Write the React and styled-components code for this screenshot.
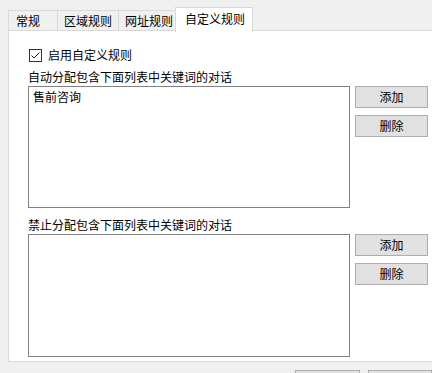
import React from 'react';
import styled, { createGlobalStyle } from 'styled-components';

const GlobalStyle = createGlobalStyle`
  html, body {
    margin: 0;
    padding: 0;
    background: #f0f0f0;
  }
  body {
    font-family: "Noto Sans CJK SC", "Noto Sans", sans-serif;
    font-size: 12px;
    color: #000;
  }
`;

const Window = styled.div`
  width: 432px;
  height: 373px;
  overflow: hidden;
  background: #f0f0f0;
  padding: 7px 0 0 8px;
  box-sizing: border-box;
`;

const TabStrip = styled.div`
  display: flex;
  align-items: flex-end;
  height: 24px;
  position: relative;
  z-index: 1;
`;

const Tab = styled.div`
  box-sizing: border-box;
  width: ${(p) => p.width}px;
  height: ${(p) => (p.active ? 25 : 21)}px;
  margin-right: -1px;
  margin-bottom: ${(p) => (p.active ? -1 : 0)}px;
  padding-left: ${(p) => p.pad}px;
  border: 1px solid #d9d9d9;
  border-bottom: ${(p) => (p.active ? 'none' : '1px solid #d9d9d9')};
  background: ${(p) => (p.active ? '#fff' : '#f0f0f0')};
  line-height: ${(p) => (p.active ? 22 : 19)}px;
  white-space: nowrap;
  position: relative;
  z-index: ${(p) => (p.active ? 2 : 1)};
`;

const Panel = styled.div`
  box-sizing: border-box;
  width: 440px;
  height: 332px;
  margin-top: -1px;
  background: #fff;
  border: 1px solid #d9d9d9;
  padding: 16px 0 0 19px;
`;

const CheckRow = styled.label`
  display: flex;
  align-items: center;
  gap: 6px;
  height: 16px;
  line-height: 16px;
  margin-left: 1px;
`;

const CheckBox = styled.span`
  box-sizing: border-box;
  width: 13px;
  height: 13px;
  border: 1px solid #333;
  background: #fff;
  display: flex;
  align-items: center;
  justify-content: center;
`;

const Section = styled.div`
  margin-top: ${(p) => p.top}px;
`;

const Caption = styled.div`
  height: 16px;
  line-height: 16px;
  margin-bottom: 1px;
`;

const Row = styled.div`
  display: flex;
  align-items: flex-start;
  gap: 5px;
`;

const ListBox = styled.div`
  box-sizing: border-box;
  width: 322px;
  height: ${(p) => p.height}px;
  border: 1px solid #828282;
  background: #fff;
  padding: 2px 0 0 4px;
  line-height: 16px;
`;

const ButtonColumn = styled.div`
  display: flex;
  flex-direction: column;
  gap: 7px;
`;

const Button = styled.button`
  box-sizing: border-box;
  width: 73px;
  height: 22px;
  padding: 0;
  border: 1px solid #adadad;
  background: #e1e1e1;
  font-family: inherit;
  font-size: 12px;
  color: #000;
  line-height: 20px;
`;

const Footer = styled.div`
  display: flex;
  gap: 8px;
  margin: 8px 0 0 287px;
`;

const tabs = [
  { label: '常规', width: 50, pad: 7 },
  { label: '区域规则', width: 62, pad: 6 },
  { label: '网址规则', width: 58, pad: 6 },
  { label: '自定义规则', width: 78, pad: 9, active: true },
];

function KeywordList({ title, items, height, top }) {
  return (
    <Section top={top}>
      <Caption>{title}</Caption>
      <Row>
        <ListBox height={height}>
          {items.map((item) => (
            <div key={item}>{item}</div>
          ))}
        </ListBox>
        <ButtonColumn>
          <Button type="button">添加</Button>
          <Button type="button">删除</Button>
        </ButtonColumn>
      </Row>
    </Section>
  );
}

export default function App() {
  return (
    <Window>
      <GlobalStyle />
      <TabStrip>
        {tabs.map((t) => (
          <Tab key={t.label} width={t.width} pad={t.pad} active={t.active}>
            {t.label}
          </Tab>
        ))}
      </TabStrip>
      <Panel>
        <CheckRow>
          <CheckBox>
            <svg width="11" height="11" viewBox="0 0 11 11">
              <path d="M1.5 5.5 L4 8 L9.5 2.5" fill="none" stroke="#222" strokeWidth="1" />
            </svg>
          </CheckBox>
          启用自定义规则
        </CheckRow>
        <KeywordList
          top={6}
          title="自动分配包含下面列表中关键词的对话"
          items={['售前咨询']}
          height={122}
        />
        <KeywordList
          top={9}
          title="禁止分配包含下面列表中关键词的对话"
          items={[]}
          height={123}
        />
      </Panel>
      <Footer>
        <Button type="button" />
        <Button type="button" />
      </Footer>
    </Window>
  );
}
